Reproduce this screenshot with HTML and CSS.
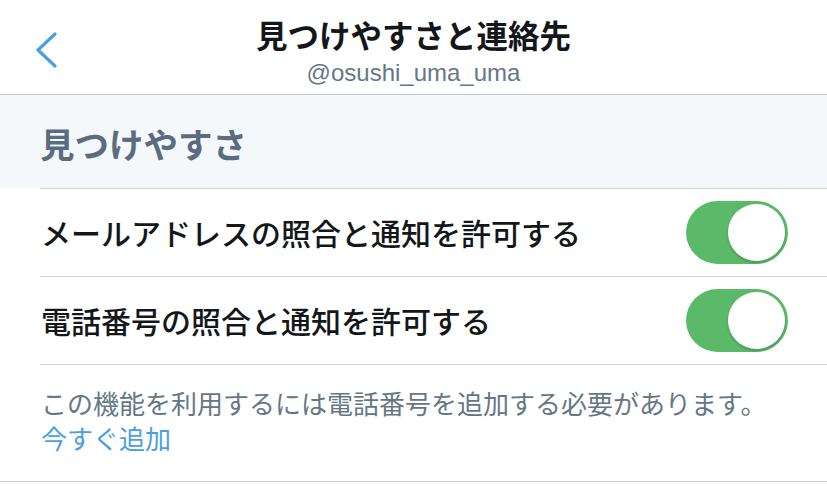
FILE: index.html
```html
<!DOCTYPE html>
<html lang="ja">
<head>
<meta charset="utf-8">
<link rel="stylesheet" href="styles.css">
</head>
<body>
<header class="nav">
  <div class="nav-left">
    <svg class="back" width="24" height="36" viewBox="0 0 24 36"><polyline points="20,2 3,18 20,34" fill="none" stroke="#4b9fe1" stroke-width="3.2" stroke-linecap="round" stroke-linejoin="round"/></svg>
  </div>
  <div class="nav-center">
    <div class="title">見つけやすさと連絡先</div>
    <div class="subtitle">@osushi_uma_uma</div>
  </div>
  <div class="nav-right"></div>
</header>
<section class="band"><h2 class="band-title">見つけやすさ</h2></section>
<div class="list">
  <div class="row"><span class="label">メールアドレスの照合と通知を許可する</span><span class="toggle"><span class="knob"></span></span></div>
  <div class="row"><span class="label">電話番号の照合と通知を許可する</span><span class="toggle"><span class="knob"></span></span></div>
</div>
<div class="foot">
  <p class="note">この機能を利用するには電話番号を追加する必要があります。<br><a class="link">今すぐ追加</a></p>
</div>
</body>
</html>
```
FILE: styles.css
```css
* { box-sizing: border-box; margin: 0; padding: 0; }
body {
  width: 827px;
  height: 486px;
  overflow: hidden;
  background: #fff;
  font-family: "Noto Sans CJK JP", "Noto Sans", sans-serif;
}
.nav {
  height: 95px;
  border-bottom: 1px solid #bfc6ce;
  display: grid;
  grid-template-columns: 1fr auto 1fr;
}
.nav-left {
  padding-left: 35px;
  padding-top: 32px;
}
.back { display: block; }
.nav-center {
  display: flex;
  flex-direction: column;
  align-items: center;
  padding-top: 13px;
}
.title {
  font-size: 31.5px;
  line-height: 42px;
  font-weight: 700;
  color: #14171a;
}
.subtitle {
  font-family: "Liberation Sans", Arial, sans-serif;
  font-size: 24px;
  line-height: 28px;
  margin-top: 4px;
  color: #657786;
}
.band {
  height: 93px;
  background: #f5f8fa;
  display: flex;
  align-items: center;
  padding-left: 40px;
}
.band-title {
  font-size: 34.5px;
  font-weight: 700;
  color: #5b6c80;
  line-height: 40px;
  margin-top: 2px;
}
.list {
  margin-left: 40px;
}
.row {
  height: 88px;
  border-top: 1px solid #cfd3d6;
  display: flex;
  align-items: center;
  justify-content: space-between;
  padding-right: 39px;
}
.row:last-child { border-bottom: 1px solid #cfd3d6; height: 89px; }
.label {
  font-size: 30px;
  font-weight: 500;
  color: #14171a;
  padding-left: 1px;
  margin-top: -2px;
}
.toggle {
  width: 102px;
  height: 63px;
  border-radius: 32px;
  background: #5aba6a;
  display: flex;
  align-items: center;
  justify-content: flex-end;
  padding-right: 3px;
}
.knob {
  width: 57px;
  height: 57px;
  border-radius: 50%;
  background: #fff;
  box-shadow: 0 2px 3px rgba(0,0,0,0.18);
}
.foot {
  border-bottom: 1px solid #cfd3d6;
  padding: 20px 30px 26px 41px;
}
.note {
  font-size: 26px;
  line-height: 35px;
  color: #657786;
}
.link { color: #4b9fe1; }
```
